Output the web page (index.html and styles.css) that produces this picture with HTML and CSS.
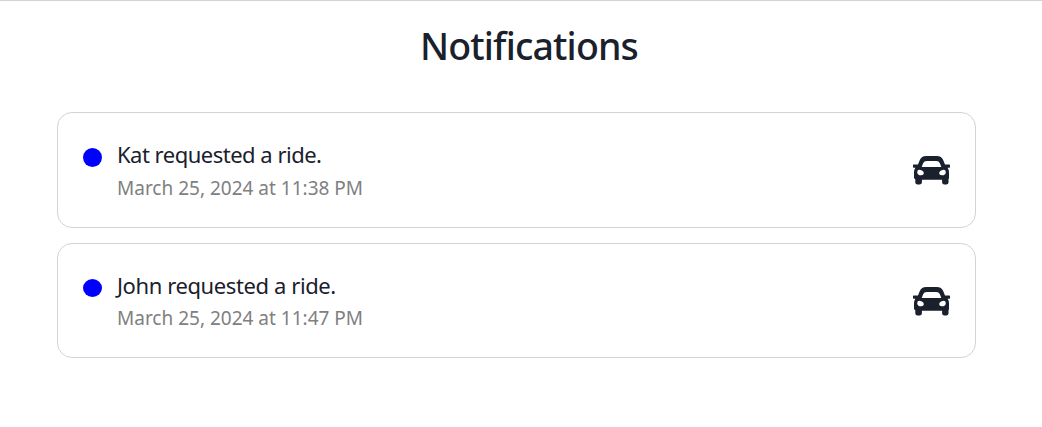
FILE: index.html
```html
<!DOCTYPE html>
<html lang="en">
<head>
<meta charset="utf-8">
<title>Notifications</title>
<link rel="stylesheet" href="styles.css">
</head>
<body>
<svg class="sprite" aria-hidden="true">
  <symbol id="car" viewBox="0 0 37 29">
    <path fill-rule="evenodd" d="M0 9.2Q0 8.6 .6 8.6H5L6.6 4.4Q8.4 0 13.2 0H23.8Q28.6 0 30.4 4.4L32 8.6H36.4Q37 8.6 37 9.2V11.1Q37 11.7 36.4 11.7H34.6Q36 13.6 36 16.3V21.5Q36 22.6 35.5 23.2V26.6Q35.5 28.4 33.6 28.4H31Q29.1 28.4 29.1 26.6V23.7H8.9V26.6Q8.9 28.4 7 28.4H4.2Q2.3 28.4 2.3 26.6V23.2Q1 22.6 1 21.5V16.3Q1 13.6 2.4 11.7H.6Q0 11.7 0 11.1ZM8.7 11.1H28.3L26.9 7.3Q25.9 5 23.3 5H13.7Q11.1 5 10.1 7.3ZM4.2 16.2Q4.2 13.8 6.4 13.8Q10.8 14.4 10.8 17.3Q10.8 19.3 8.2 19.3Q4.2 19.3 4.2 16.2ZM32.8 16.2Q32.8 13.8 30.6 13.8Q26.2 14.4 26.2 17.3Q26.2 19.3 28.8 19.3Q32.8 19.3 32.8 16.2Z"/>
  </symbol>
</svg>
<main class="page">
  <h1 class="title">Notifications</h1>
  <section class="list">
    <article class="card">
      <span class="dot"></span>
      <div class="details">
        <p class="message">Kat requested a ride.</p>
        <p class="date">March 25, 2024 at 11:38 PM</p>
      </div>
      <svg class="car"><use href="#car"/></svg>
    </article>
    <article class="card">
      <span class="dot"></span>
      <div class="details">
        <p class="message message-john">John requested a ride.</p>
        <p class="date">March 25, 2024 at 11:47 PM</p>
      </div>
      <svg class="car"><use href="#car"/></svg>
    </article>
  </section>
</main>
</body>
</html>
```
FILE: styles.css
```css
* { box-sizing: border-box; }
body {
  margin: 0;
  background: #fff;
  color: #1a202c;
  font-family: "Noto Sans", "Open Sans", sans-serif;
}
.sprite { display: none; }
.page {
  height: 427px;
  border-top: 1px solid #d3d3d3;
}
.title {
  margin: 0;
  padding: 16px 0 0 16px;
  height: 111px;
  font-size: 37.5px;
  line-height: 58px;
  font-weight: 500;
  letter-spacing: -0.85px;
  text-align: center;
}
.list {
  display: grid;
  gap: 15px;
  margin: 0 66px 0 57px;
}
.card {
  display: flex;
  align-items: flex-start;
  height: 116px;
  padding: 0 25px;
  border: 1px solid #d3d3d3;
  border-radius: 15px;
}
.card + .card { height: 115px; }
.dot {
  width: 19px;
  height: 19px;
  margin-top: 35px;
  border-radius: 50%;
  background: #00f;
}
.card + .card .dot { height: 18px; }
.details {
  flex: 1;
  padding: 25px 0 0 15px;
  white-space: nowrap;
}
.message, .date { margin: 0; }
.message {
  font-size: 22px;
  line-height: 33px;
  letter-spacing: -0.5px;
}
.message-john { letter-spacing: -0.4px; }
.date {
  padding-top: 1px;
  color: gray;
  font-size: 19px;
  line-height: 32px;
}
.card + .card .date { padding-top: 0; }
.car {
  width: 37px;
  height: 29px;
  margin-top: 43px;
  fill: #1a202c;
}
```
